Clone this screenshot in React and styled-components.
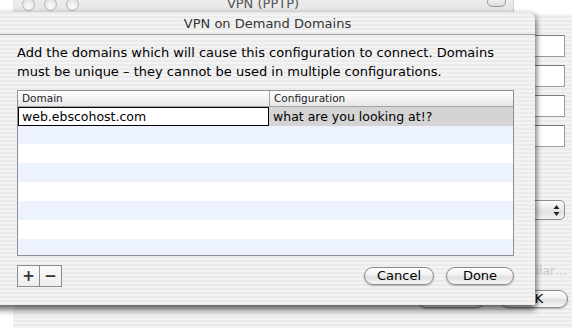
import React from "react";
import styled, { createGlobalStyle } from "styled-components";

const Global = createGlobalStyle`
  html, body { margin: 0; padding: 0; }
  body {
    width: 572px;
    height: 328px;
    overflow: hidden;
    background: #fff;
    font-family: "DejaVu Sans", "Liberation Sans", sans-serif;
    color: #000;
  }
`;

const stripes = `repeating-linear-gradient(to bottom, #ebebeb 0px, #ebebeb 2px, #f3f3f3 2px, #f3f3f3 4px)`;

const Desktop = styled.div`
  position: relative;
  width: 572px;
  height: 328px;
  overflow: hidden;
  background: #fff;
`;

/* window behind the sheet */
const BackWindow = styled.div`
  position: absolute;
  left: 13px;
  top: -8px;
  width: 580px;
  height: 350px;
  display: flex;
  flex-direction: column;
  background: ${stripes};
`;

const BackTop = styled.div`
  display: flex;
  height: 22px;
`;

const BackTitleBar = styled.div`
  position: relative;
  width: 500px;
  display: flex;
  align-items: center;
  justify-content: center;
  background: linear-gradient(#f2f2f2, #e4e4e4);
  border-bottom: 1px solid #a8a8a8;
  font-size: 13px;
  color: #555;
  padding-top: 2px;
  box-sizing: border-box;
`;

const Lights = styled.div`
  position: absolute;
  left: 9px;
  top: 6px;
  display: flex;
  gap: 9px;
`;

const Light = styled.span`
  width: 11px;
  height: 11px;
  border-radius: 50%;
  border: 1px solid #b4b4b4;
  background: radial-gradient(circle at 50% 70%, #fbfbfb, #dcdcdc);
`;

const Pill = styled.span`
  position: absolute;
  right: 7px;
  top: 5px;
  width: 17px;
  height: 8px;
  border-radius: 5px;
  border: 1px solid #9a9a9a;
  background: linear-gradient(#fafafa, #dadada);
`;

const WhiteStrip = styled.div`
  flex: 1;
  background: #fff;
  box-shadow: inset 1px 0 0 #cfcfcf;
`;

const BackBody = styled.div`
  flex: 1;
  display: flex;
  flex-direction: column;
  align-items: flex-end;
  padding: 21px 28px 0 0;
`;

const Field = styled.div`
  width: 31px;
  height: 22px;
  margin-bottom: 8px;
  background: #fff;
  border: 1px solid #9c9c9c;
  border-top-color: #7a7a7a;
  box-sizing: border-box;
`;

const Popup = styled.div`
  margin-top: 45px;
  width: 40px;
  height: 20px;
  border: 1px solid #8e8e8e;
  border-radius: 5px;
  background: linear-gradient(#fdfdfd, #e2e2e2 60%, #f2f2f2);
  display: flex;
  justify-content: flex-end;
  align-items: center;
  padding-right: 4px;
  box-sizing: border-box;
`;

const Faded = styled.div`
  margin-top: 44px;
  font-size: 12px;
  color: #c8c8c8;
  white-space: nowrap;
  margin-right: -2px;
`;

const BackButtons = styled.div`
  margin-top: 12px;
  display: flex;
  gap: 15px;
  margin-right: -3px;
`;

const AquaButton = styled.button`
  width: ${(p) => p.w}px;
  height: 18px;
  border-radius: 9px;
  border: 1px solid #8a8a8a;
  background: linear-gradient(#ffffff, #f1f1f1 45%, #dedede 55%, #f7f7f7);
  box-shadow: 0 1px 2px rgba(0, 0, 0, 0.25);
  font-family: inherit;
  font-size: 13px;
  color: #000;
  padding: 0;
  line-height: 16px;
`;

/* the sheet */
const Sheet = styled.div`
  position: absolute;
  left: -6px;
  top: 12px;
  width: 541px;
  height: 293px;
  display: flex;
  flex-direction: column;
  background: ${stripes};
  border-top-right-radius: 8px;
  box-shadow: 0 5px 6px rgba(0, 0, 0, 0.55), 3px 0 4px rgba(0, 0, 0, 0.18);
  overflow: hidden;
`;

const SheetTitle = styled.div`
  height: 22px;
  flex: none;
  display: flex;
  align-items: center;
  justify-content: center;
  border-bottom: 1px solid #9c9c9c;
  font-size: 13px;
  color: #333;
  padding-left: 6px;
`;

const SheetBody = styled.div`
  flex: 1;
  display: flex;
  flex-direction: column;
  padding: 8px 21px 0 23px;
`;

const Message = styled.p`
  margin: 0;
  font-size: 13px;
  line-height: 19px;
`;

const Table = styled.div`
  margin-top: 9px;
  height: 166px;
  border: 1px solid #8f8f8f;
  box-sizing: border-box;
  display: flex;
  flex-direction: column;
  overflow: hidden;
  background: repeating-linear-gradient(
    to bottom,
    #edf3fe 0px,
    #edf3fe 19px,
    #ffffff 19px,
    #ffffff 38px
  );
  background-position: 0 34px;
`;

const HeaderRow = styled.div`
  display: grid;
  grid-template-columns: 251px 1fr;
  height: 15px;
  flex: none;
  background: linear-gradient(#ffffff, #f4f4f4 50%, #e6e6e6);
  border-bottom: 1px solid #a4a4a4;
`;

const HeaderCell = styled.div`
  font-size: 10.5px;
  line-height: 15px;
  padding-left: 4px;
  color: #222;
  border-left: ${(p) => (p.first ? "none" : "1px solid #a4a4a4")};
`;

const Row = styled.div`
  display: grid;
  grid-template-columns: 251px 1fr;
  height: 19px;
  flex: none;
`;

const EditCell = styled.div`
  background: #fff;
  border: 1px solid #000;
  font-size: 12.5px;
  line-height: 17px;
  padding-left: 3px;
  box-sizing: border-box;
`;

const SelCell = styled.div`
  background: #d4d4d4;
  font-size: 12.5px;
  line-height: 19px;
  padding-left: 4px;
`;

const Footer = styled.div`
  display: flex;
  align-items: center;
  margin-top: 9px;
`;

const PlusMinus = styled.div`
  display: flex;
  border: 1px solid #8c8c8c;
  height: 22px;
  box-sizing: border-box;
`;

const PMButton = styled.div`
  width: 21px;
  display: flex;
  align-items: center;
  justify-content: center;
  background: linear-gradient(#fafafa, #eeeeee);
  border-left: ${(p) => (p.first ? "none" : "1px solid #8c8c8c")};
  font-size: 15px;
  font-weight: bold;
  color: #333;
`;

const Actions = styled.div`
  margin-left: auto;
  display: flex;
  gap: 12px;
`;

export default function App() {
  return (
    <Desktop>
      <Global />
      <BackWindow>
        <BackTop>
          <BackTitleBar>
            <Lights>
              <Light />
              <Light />
              <Light />
            </Lights>
            VPN (PPTP)
            <Pill />
          </BackTitleBar>
          <WhiteStrip />
        </BackTop>
        <BackBody>
          <Field />
          <Field />
          <Field />
          <Field />
          <Popup>
            <svg width="7" height="11" viewBox="0 0 7 11">
              <path d="M3.5 0 L6.5 4 H0.5 Z M3.5 11 L6.5 7 H0.5 Z" fill="#222" />
            </svg>
          </Popup>
          <Faded>Similar…</Faded>
          <BackButtons>
            <AquaButton w={68}>Cancel</AquaButton>
            <AquaButton w={68}>OK</AquaButton>
          </BackButtons>
        </BackBody>
      </BackWindow>

      <Sheet>
        <SheetTitle>VPN on Demand Domains</SheetTitle>
        <SheetBody>
          <Message>
            Add the domains which will cause this configuration to connect. Domains
            <br />
            must be unique – they cannot be used in multiple configurations.
          </Message>
          <Table>
            <HeaderRow>
              <HeaderCell first>Domain</HeaderCell>
              <HeaderCell>Configuration</HeaderCell>
            </HeaderRow>
            <Row>
              <EditCell>web.ebscohost.com</EditCell>
              <SelCell>what are you looking at!?</SelCell>
            </Row>
          </Table>
          <Footer>
            <PlusMinus>
              <PMButton first>+</PMButton>
              <PMButton>−</PMButton>
            </PlusMinus>
            <Actions>
              <AquaButton w={70}>Cancel</AquaButton>
              <AquaButton w={68}>Done</AquaButton>
            </Actions>
          </Footer>
        </SheetBody>
      </Sheet>
    </Desktop>
  );
}
